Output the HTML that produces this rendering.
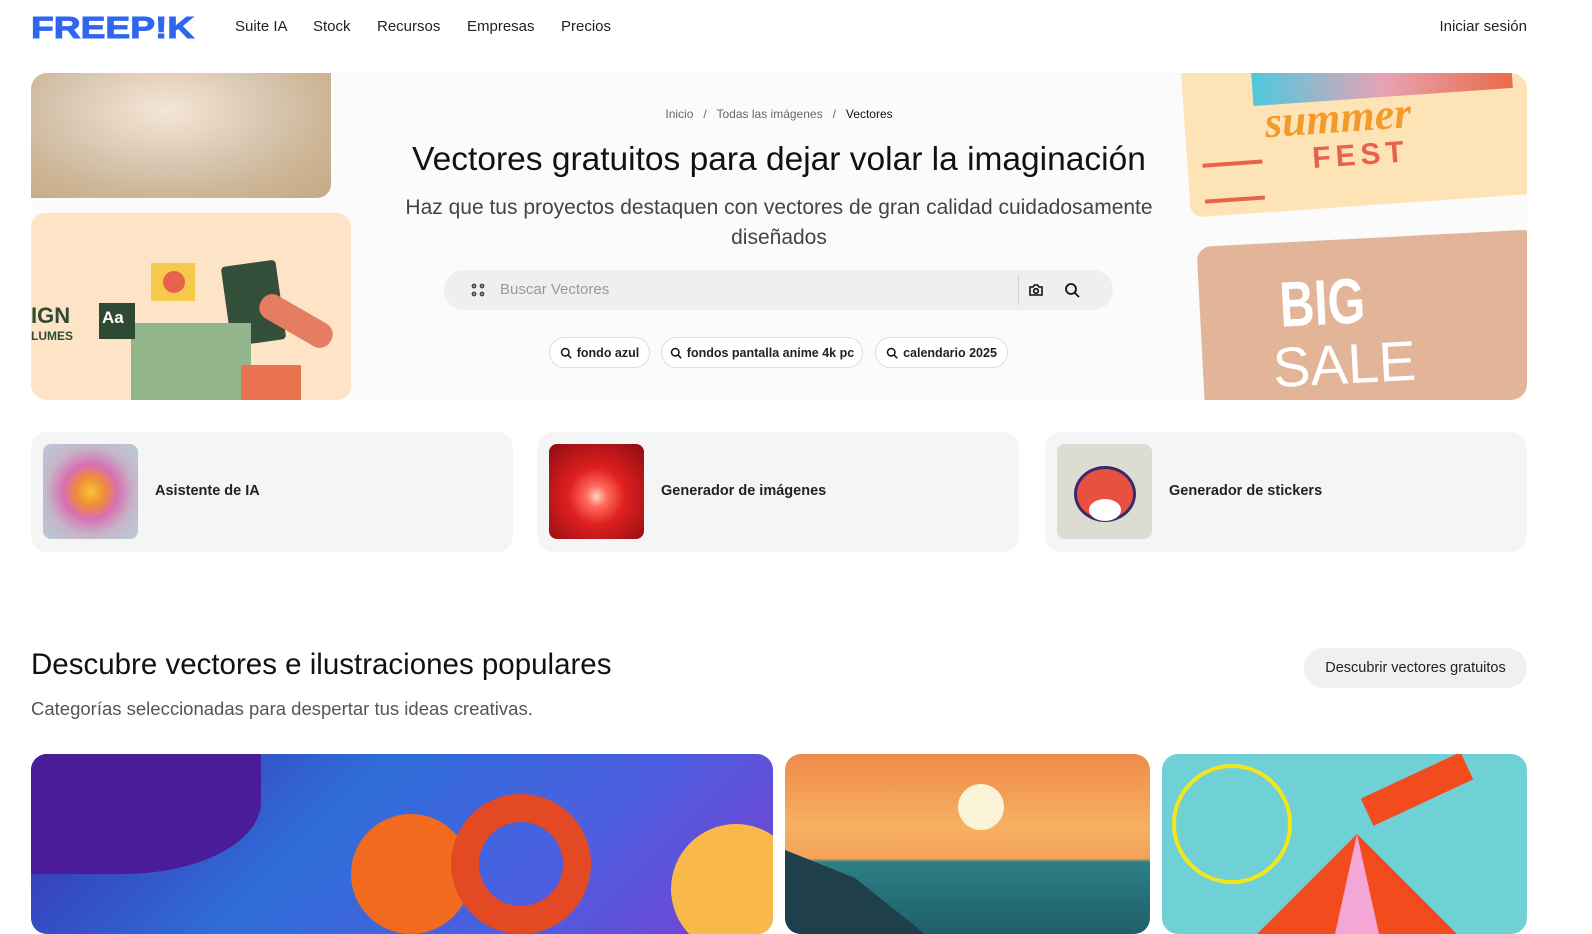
<!DOCTYPE html>
<html><head><meta charset="utf-8"><style>
*{box-sizing:border-box;margin:0;padding:0}
body{width:1592px;height:920px;overflow:hidden;background:#fff;font-family:"Liberation Sans",Arial,sans-serif;color:#111;position:relative}
.a{position:absolute}
.nav{font-size:15px;color:#222;top:18px}
.logo{left:31px;top:10px;font-weight:900;font-size:31px;color:#2f66ec;letter-spacing:0px;transform:scaleX(1.2);transform-origin:left;-webkit-text-stroke:1px #2f66ec}
.hero{left:31px;top:73px;width:1496px;height:327px;border-radius:16px;overflow:hidden;background:#fbfbfb}
.chip{top:337px;height:31px;border:1px solid #ddd;border-radius:16px;background:#fff;font-size:12.5px;font-weight:bold;display:flex;align-items:center;justify-content:center;gap:5px;color:#222}
.card{top:432px;height:120px;width:482px;background:#f5f5f5;border-radius:16px}
.card .im{position:absolute;left:12px;top:12px;width:95px;height:95px;border-radius:8px;overflow:hidden}
.card .t{position:absolute;left:124px;top:51px;font-size:14.5px;font-weight:bold;color:#222}
.ph{top:754px;height:180px;border-radius:16px;overflow:hidden}
</style></head><body>
<div class="a logo">FREEP!K</div>
<div class="a nav" style="left:235px">Suite IA</div>
<div class="a nav" style="left:313px">Stock</div>
<div class="a nav" style="left:377px">Recursos</div>
<div class="a nav" style="left:467px">Empresas</div>
<div class="a nav" style="left:561px">Precios</div>
<div class="a nav" style="right:65px">Iniciar sesión</div>

<div class="a hero">
  <div class="a" style="left:0;top:0;width:300px;height:125px;border-radius:0 0 14px 0;background:radial-gradient(ellipse at 45% 30%,#f3e6d8 0,#e7d3bf 25%,#d6c6b0 45%,#cdb595 70%,#c4a985 100%)"></div>
  <div class="a" style="left:0;top:140px;width:320px;height:187px;border-radius:14px;background:#fde4c6">
    <div class="a" style="left:120px;top:50px;width:44px;height:38px;background:#f6c94a"></div>
    <div class="a" style="left:132px;top:58px;width:22px;height:22px;border-radius:50%;background:#e8634b"></div>
    <div class="a" style="left:195px;top:50px;width:55px;height:80px;background:#34503a;border-radius:4px;transform:rotate(-8deg)"></div>
    <div class="a" style="left:100px;top:110px;width:120px;height:77px;background:#93b58c"></div>
    <div class="a" style="left:68px;top:90px;width:36px;height:36px;background:#2f4a33;color:#fff;font-weight:bold;font-size:17px;padding:5px 3px">Aa</div>
    <div class="a" style="left:0;top:90px;font-weight:900;font-size:22px;color:#2f4a33">IGN</div>
    <div class="a" style="left:0;top:116px;font-weight:900;font-size:12px;color:#2f4a33">LUMES</div>
    <div class="a" style="left:225px;top:95px;width:80px;height:26px;background:#e47d62;border-radius:12px;transform:rotate(30deg)"></div>
    <div class="a" style="left:210px;top:152px;width:60px;height:35px;background:#e8734e"></div>
  </div>
  <div class="a" style="left:1150px;top:0;width:346px;height:145px;border-radius:0 0 12px 12px;background:#fde3b6;transform:rotate(-4deg);transform-origin:left top">
    <div class="a" style="left:70px;top:0;width:260px;height:38px;background:linear-gradient(90deg,#4ec8de,#e6a3b5,#e96b4a)"></div>
    <div class="a" style="left:80px;top:30px;font-family:'Liberation Serif',serif;font-style:italic;font-weight:bold;font-size:44px;color:#f39a2b">summer</div>
    <div class="a" style="left:125px;top:78px;font-weight:900;font-size:30px;letter-spacing:5px;color:#e8624b">FEST</div>
    <div class="a" style="left:15px;top:92px;width:60px;height:40px;border-top:4px solid #e8624b;border-bottom:4px solid #e8624b"></div>
  </div>
  <div class="a" style="left:1170px;top:165px;width:340px;height:180px;border-radius:14px;background:#e3b598;transform:rotate(-3deg)">
    <div class="a" style="left:80px;top:25px;font-weight:900;font-size:64px;color:#fff;transform:scaleX(.75);transform-origin:left">BIG</div>
    <div class="a" style="left:70px;top:92px;font-size:56px;color:#fff">SALE</div>
  </div>
  <div class="a" style="left:0;width:100%;top:34px;text-align:center;font-size:12px;color:#666">Inicio &nbsp;&nbsp;/&nbsp;&nbsp; Todas las imágenes &nbsp;&nbsp;/&nbsp;&nbsp; <span style="color:#111">Vectores</span></div>
  <div class="a" style="left:0;width:100%;top:68px;text-align:center;font-size:33.5px;color:#111">Vectores gratuitos para dejar volar la imaginación</div>
  <div class="a" style="left:340px;width:816px;top:120px;text-align:center;font-size:21px;line-height:30px;color:#444">Haz que tus proyectos destaquen con vectores de gran calidad cuidadosamente diseñados</div>
  <div class="a" style="left:413px;top:197px;width:669px;height:40px;border-radius:20px;background:#efefef">
    <svg class="a" style="left:27px;top:13px" width="14" height="14" viewBox="0 0 14 14" fill="none" stroke="#444" stroke-width="1.6"><circle cx="3" cy="3" r="1.6"/><circle cx="11" cy="3" r="1.6"/><circle cx="3" cy="11" r="1.6"/><circle cx="11" cy="11" r="1.6"/></svg>
    <div class="a" style="left:56px;top:11px;font-size:15px;color:#999">Buscar Vectores</div>
    <div class="a" style="left:574px;top:5px;width:1px;height:30px;background:#d0d0d0"></div>
    <svg class="a" style="left:584px;top:12px" width="16" height="16" viewBox="0 0 16 16" fill="none" stroke="#111" stroke-width="1.6"><path d="M2 5h3l1.5-2h3L11 5h3v8H2z"/><circle cx="8" cy="9" r="2.3"/></svg>
    <svg class="a" style="left:620px;top:12px" width="16" height="16" viewBox="0 0 16 16" fill="none" stroke="#111" stroke-width="1.8"><circle cx="7" cy="7" r="5"/><path d="M11 11l4 4"/></svg>
  </div>
</div>
<div class="a chip" style="left:549px;width:101px"><svg width="12" height="12" viewBox="0 0 16 16" fill="none" stroke="#111" stroke-width="2"><circle cx="7" cy="7" r="5"/><path d="M11 11l4 4"/></svg>fondo azul</div>
<div class="a chip" style="left:661px;width:202px"><svg width="12" height="12" viewBox="0 0 16 16" fill="none" stroke="#111" stroke-width="2"><circle cx="7" cy="7" r="5"/><path d="M11 11l4 4"/></svg>fondos pantalla anime 4k pc</div>
<div class="a chip" style="left:875px;width:133px"><svg width="12" height="12" viewBox="0 0 16 16" fill="none" stroke="#111" stroke-width="2"><circle cx="7" cy="7" r="5"/><path d="M11 11l4 4"/></svg>calendario 2025</div>

<div class="a card" style="left:31px"><div class="im" style="background:radial-gradient(circle at 50% 50%,#f7c531 0,#f08a3b 22%,#d86fb2 40%,#c5b5c8 65%,#b8ccd8 100%)"></div><div class="t">Asistente de IA</div></div>
<div class="a card" style="left:537px"><div class="im" style="background:radial-gradient(circle at 50% 55%,#ffd6c6 0,#ff6a5a 15%,#e0201f 40%,#8a0b12 100%)"></div><div class="t">Generador de imágenes</div></div>
<div class="a card" style="left:1045px"><div class="im" style="background:#dcdcd2"><div class="a" style="left:17px;top:22px;width:62px;height:56px;border-radius:50%;background:#e8503f;border:3px solid #3b2a6a"></div><div class="a" style="left:32px;top:55px;width:32px;height:22px;border-radius:50%;background:#fff"></div></div><div class="t">Generador de stickers</div></div>

<div class="a" style="left:31px;top:648px;font-size:29.5px;color:#111">Descubre vectores e ilustraciones populares</div>
<div class="a" style="left:31px;top:698px;font-size:18.5px;color:#555">Categorías seleccionadas para despertar tus ideas creativas.</div>
<div class="a" style="left:1304px;top:648px;width:223px;height:40px;border-radius:20px;background:#f0f0f0;font-size:14.5px;text-align:center;line-height:40px;color:#222">Descubrir vectores gratuitos</div>

<div class="a ph" style="left:31px;width:742px;background:linear-gradient(135deg,#3a2bb0 0,#2f6ed8 40%,#4d5ee0 70%,#7a3fd0 100%)">
  <div class="a" style="left:0;top:0;width:230px;height:120px;background:#4a1c9a;border-radius:0 0 60% 0"></div>
  <div class="a" style="left:320px;top:60px;width:120px;height:120px;border-radius:50%;background:#f26a1d"></div>
  <div class="a" style="left:420px;top:40px;width:140px;height:140px;border-radius:50%;border:28px solid #e34a23"></div>
  <div class="a" style="left:640px;top:70px;width:130px;height:130px;border-radius:50%;background:#f8b94a"></div>
</div>
<div class="a ph" style="left:785px;width:365px;background:linear-gradient(180deg,#f08a4a 0,#f6b060 40%,#f3a35a 58%,#2d7f86 60%,#1f5f6a 100%)">
  <div class="a" style="left:173px;top:30px;width:46px;height:46px;border-radius:50%;background:#fbf3d8"></div>
  <div class="a" style="left:0;top:40px;width:140px;height:140px;background:#1f3f4a;clip-path:polygon(0 40%,50% 60%,100% 100%,0 100%)"></div>
</div>
<div class="a ph" style="left:1162px;width:365px;background:#6fd0d6">
  <div class="a" style="left:10px;top:10px;width:120px;height:120px;border-radius:50%;border:4px solid #f5e61a"></div>
  <div class="a" style="left:95px;top:80px;width:200px;height:100px;background:#f24b1e;clip-path:polygon(50% 0,100% 100%,0 100%)"></div>
  <div class="a" style="left:140px;top:80px;width:110px;height:100px;background:#f4a6d6;clip-path:polygon(50% 0,70% 100%,30% 100%)"></div>
  <div class="a" style="left:200px;top:20px;width:110px;height:30px;background:#f24b1e;transform:rotate(-25deg)"></div>
</div>
</body></html>
